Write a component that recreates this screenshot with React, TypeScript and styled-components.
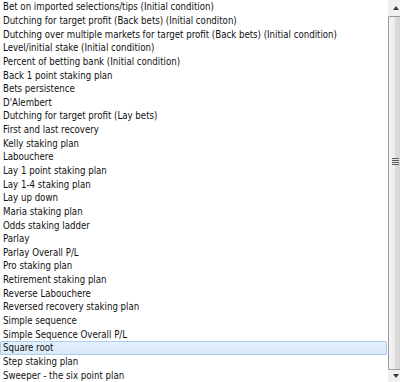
import React from "react";
import styled, { createGlobalStyle } from "styled-components";

const Global = createGlobalStyle`
  html, body { margin: 0; padding: 0; background: #ffffff; }
  body { width: 400px; height: 382px; overflow: hidden; }
`;

const items = [
  "Bet on imported selections/tips (Initial condition)",
  "Dutching for target profit (Back bets) (Initial conditon)",
  "Dutching over multiple markets for target profit (Back bets) (Initial condition)",
  "Level/initial stake (Initial condition)",
  "Percent of betting bank (Initial condition)",
  "Back 1 point staking plan",
  "Bets persistence",
  "D'Alembert",
  "Dutching for target profit (Lay bets)",
  "First and last recovery",
  "Kelly staking plan",
  "Labouchere",
  "Lay 1 point staking plan",
  "Lay 1-4 staking plan",
  "Lay up down",
  "Maria staking plan",
  "Odds staking ladder",
  "Parlay",
  "Parlay Overall P/L",
  "Pro staking plan",
  "Retirement staking plan",
  "Reverse Labouchere",
  "Reversed recovery staking plan",
  "Simple sequence",
  "Simple Sequence Overall P/L",
  "Square root",
  "Step staking plan",
  "Sweeper - the six point plan",
];

const Frame = styled.div`
  display: flex;
  width: 400px;
  height: 382px;
  overflow: hidden;
  background: #ffffff;
`;

const List = styled.ul`
  flex: 1;
  margin: 0;
  padding: 0 1px 0 0;
  list-style: none;
  display: flex;
  flex-direction: column;
`;

const Row = styled.li<{ $selected?: boolean }>`
  box-sizing: border-box;
  height: 13.66px;
  display: flex;
  align-items: center;
  font-family: "DejaVu Sans Condensed", "DejaVu Sans", sans-serif;
  font-stretch: condensed;
  font-size: 9.6px;
  color: #111111;
  white-space: nowrap;
  border: 1px solid ${(p) => (p.$selected ? "#a9cdf0" : "transparent")};
  border-radius: 1px;
  padding-left: 2px;
  background: ${(p) =>
    p.$selected ? "linear-gradient(#e6f0fb, #d9e8f9)" : "transparent"};
`;

const ScrollBar = styled.div`
  width: 12px;
  display: flex;
  flex-direction: column;
  background: #f0f0f0;
`;

const ArrowButton = styled.div<{ $h: number }>`
  height: ${(p) => p.$h}px;
  display: flex;
  align-items: center;
  justify-content: center;
  padding-left: 3px;
`;

const Thumb = styled.div`
  flex: 1;
  box-sizing: border-box;
  border: 1px solid #9a9a9a;
  border-right: none;
  border-radius: 2px 0 0 2px;
  background: linear-gradient(to right, #f6f6f6 0%, #ececec 50%, #dadada 60%, #d6d6d6 100%);
  display: flex;
  align-items: center;
  justify-content: center;
  padding-left: 2px;
`;

const Grip = styled.div`
  width: 7px;
  height: 7px;
  background: repeating-linear-gradient(
    to bottom,
    #5a5a5a 0px,
    #5a5a5a 1px,
    #e8e8e8 1px,
    #e8e8e8 2px
  );
  margin-top: -64px;
`;

const Arrow = ({ up }: { up?: boolean }) => (
  <svg width="6" height="4" viewBox="0 0 6 4">
    <polygon points={up ? "0,4 6,4 3,0" : "0,0 6,0 3,4"} fill="#3c3c3c" />
  </svg>
);

export default function App() {
  return (
    <>
      <Global />
      <Frame>
        <List>
          {items.map((t) => (
            <Row key={t} $selected={t === "Square root"}>
              {t}
            </Row>
          ))}
        </List>
        <ScrollBar>
          <ArrowButton $h={16}>
            <Arrow up />
          </ArrowButton>
          <Thumb>
            <Grip />
          </Thumb>
          <ArrowButton $h={12}>
            <Arrow />
          </ArrowButton>
        </ScrollBar>
      </Frame>
    </>
  );
}
